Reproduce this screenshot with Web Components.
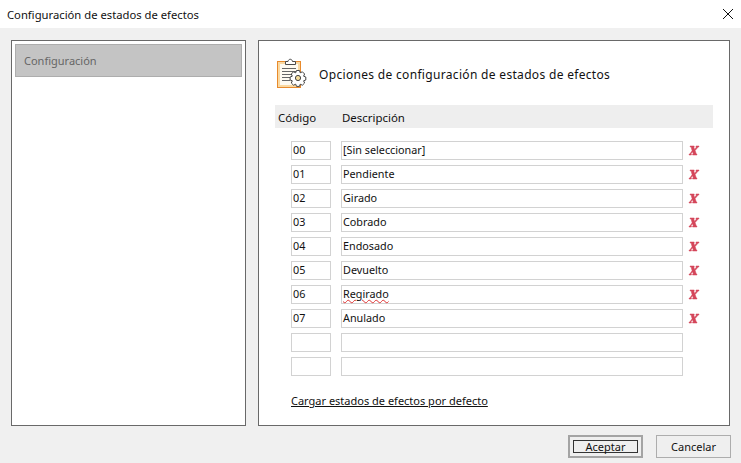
<!DOCTYPE html>
<html>
<head>
<meta charset="utf-8">
<title>Configuración de estados de efectos</title>
<style>
  html, body { margin: 0; padding: 0; background: #f0f0f0; }
  body { font: 12px "Noto Sans", "Open Sans", sans-serif; color: #111; }
</style>
</head>
<body>
<template id="tpl-dialog">
  <style>
    :host { display: flex; flex-direction: column; width: 741px; height: 463px; overflow: hidden; background: #f0f0f0; }
    .title { flex: none; height: 28px; background: #fff; display: flex; align-items: center; justify-content: space-between; padding: 0 8px 0 7px; font-size: 11.25px; }
    .title svg { display: block; }
    .main { flex: none; display: flex; gap: 12px; padding: 12px 11px 0 11px; height: 386px; }
    .foot { flex: none; display: flex; justify-content: flex-end; gap: 13px; padding: 9px 10px 0 0; }
  </style>
  <div class="title">
    <span><slot name="title"></slot></span>
    <svg width="10" height="10" viewBox="0 0 10 10"><path d="M0 0L10 10M10 0L0 10" stroke="#111" stroke-width="1" fill="none"/></svg>
  </div>
  <div class="main"><slot></slot></div>
  <div class="foot"><slot name="buttons"></slot></div>
</template>

<template id="tpl-nav-panel">
  <style>
    :host { display: block; box-sizing: border-box; width: 235px; height: 386px; background: #fff; border: 1px solid #696969; padding: 3px; }
  </style>
  <slot></slot>
</template>

<template id="tpl-nav-item">
  <style>
    :host { display: flex; align-items: center; box-sizing: border-box; height: 33px; width: 227px; padding-left: 8px; background: #c4c4c4; border: 1px solid #adadad; color: #666; font-size: 11px; }
  </style>
  <slot></slot>
</template>

<template id="tpl-options-panel">
  <style>
    :host { display: block; box-sizing: border-box; width: 472px; height: 386px; background: #fff; border: 1px solid #696969; padding: 16px 16px 0 16px; }
    .head { display: flex; align-items: center; gap: 9px; height: 36px; padding-left: 1px; font-size: 12px; letter-spacing: .32px; }
    .head span { padding-bottom: 2px; }
    .head svg { display: block; flex: none; }
    .band { display: flex; align-items: center; height: 23px; margin: 12px 0 13px 0; width: 438px; background: #eee; padding: 1px 0 0 3px; box-sizing: border-box; font-size: 11.45px; }
    .band span:first-child { width: 64px; }
    .rows { display: flex; flex-direction: column; gap: 5px; padding-left: 16px; }
    .link { margin: 17px 0 0 16px; font-size: 11px; text-decoration: underline; color: #111; }
  </style>
  <div class="head">
    <svg width="34" height="34" viewBox="0 0 34 34">
      <rect x="1.5" y="3.5" width="23" height="26" fill="#fad9a2" stroke="#e88a2c"/>
      <rect x="4" y="6" width="18" height="21" fill="#fefaf0"/>
      <path d="M9.5 6.5V3.5H12C12.5 .5 16 .5 16.5 3.5H19.5V6.5Z" fill="#fff" stroke="#4a4a4a"/>
      <path d="M6 10.5H20M6 13.5H20M6 16.5H16M6 19.5H14M6 22.5H14" stroke="#666" fill="none"/>
      <g transform="translate(0 -3)">
        <path d="M20.5 15.5h3l.7 2.3 2.2-1 2.2 2.2-1 2.2 2.2.8v3l-2.2.8 1 2.2-2.2 2.2-2.2-1-.7 2.2h-3l-.8-2.2-2.2 1-2.2-2.2 1-2.2-2.2-.8v-3l2.2-.8-1-2.2 2.2-2.2 2.2 1z" fill="#fff" stroke="#444"/>
        <circle cx="22" cy="23" r="2.6" fill="#f5dc9a" stroke="#444"/>
      </g>
    </svg>
    <span><slot name="heading"></slot></span>
  </div>
  <div class="band"><span>Código</span><span>Descripción</span></div>
  <div class="rows"><slot></slot></div>
  <div class="link"><slot name="link"></slot></div>
</template>

<template id="tpl-state-row">
  <style>
    :host { display: flex; align-items: center; height: 19px; font-size: 10.8px; }
    .box { box-sizing: border-box; height: 19px; border: 1px solid #d2d2d2; background: #fff; padding-left: 1px; line-height: 16px; color: #111; white-space: nowrap; }
    .code { width: 40px; }
    .desc { width: 342px; margin-left: 10px; }
    .x { width: 22px; padding: 0 0 1px 6px; box-sizing: border-box; }
    .x svg { display: block; overflow: visible; }
    .squiggle { text-decoration: underline wavy #d33; text-decoration-thickness: 1px; }
  </style>
  <div class="box code"></div>
  <div class="box desc"></div>
  <div class="x"></div>
</template>

<template id="tpl-dialog-button">
  <style>
    :host { display: flex; align-items: center; justify-content: center; box-sizing: border-box; width: 75px; height: 23px; background: #efefef; border: 1px solid #adadad; font-size: 11px; }
    :host([default]) { border: 2px solid #a4a4a4; padding: 3px; }
    .inner { display: flex; align-items: center; justify-content: center; width: 100%; height: 100%; box-sizing: border-box; }
    :host([default]) .inner { border: 1px solid #333; }
  </style>
  <div class="inner"><slot></slot></div>
</template>

<efectos-dialog>
  <span slot="title">Configuración de estados de efectos</span>
  <nav-panel><nav-item>Configuración</nav-item></nav-panel>
  <options-panel>
    <span slot="heading">Opciones de configuración de estados de efectos</span>
    <state-row code="00" desc="[Sin seleccionar]"></state-row>
    <state-row code="01" desc="Pendiente"></state-row>
    <state-row code="02" desc="Girado"></state-row>
    <state-row code="03" desc="Cobrado"></state-row>
    <state-row code="04" desc="Endosado"></state-row>
    <state-row code="05" desc="Devuelto"></state-row>
    <state-row code="06" desc="Regirado" misspelt></state-row>
    <state-row code="07" desc="Anulado"></state-row>
    <state-row></state-row>
    <state-row></state-row>
    <span slot="link">Cargar estados de efectos por defecto</span>
  </options-panel>
  <dialog-button slot="buttons" default>Aceptar</dialog-button>
  <dialog-button slot="buttons">Cancelar</dialog-button>
</efectos-dialog>

<script>
function stamp(el, id) {
  const root = el.attachShadow({ mode: "open" });
  root.appendChild(document.getElementById(id).content.cloneNode(true));
  return root;
}

class EfectosDialog extends HTMLElement {
  constructor() { super(); stamp(this, "tpl-dialog"); }
}
class NavPanel extends HTMLElement {
  constructor() { super(); stamp(this, "tpl-nav-panel"); }
}
class NavItem extends HTMLElement {
  constructor() { super(); stamp(this, "tpl-nav-item"); }
}
class OptionsPanel extends HTMLElement {
  constructor() { super(); stamp(this, "tpl-options-panel"); }
}
class DialogButton extends HTMLElement {
  constructor() { super(); stamp(this, "tpl-dialog-button"); }
}
class StateRow extends HTMLElement {
  constructor() { super(); stamp(this, "tpl-state-row"); }
  connectedCallback() {
    const code = this.getAttribute("code");
    if (!code) return; // empty rows have no delete mark
    const root = this.shadowRoot;
    root.querySelector(".code").textContent = code;
    const desc = root.querySelector(".desc");
    if (this.hasAttribute("misspelt")) {
      const s = document.createElement("span");
      s.className = "squiggle";
      s.textContent = this.getAttribute("desc");
      desc.appendChild(s);
    } else {
      desc.textContent = this.getAttribute("desc");
    }
    root.querySelector(".x").innerHTML =
      '<svg width="10" height="9" viewBox="0 0 10 9"><path d="M1 0H5.2V.7L4.8 .9L5.6 3.4L7.4 1.1L7 .7V0H10V.7L9.2 1L6.1 4.6L7.3 8L8 8.3V9H3.6V8.3L4.3 8L3.5 5.7L1.8 8L2.4 8.3V9H0V8.3L.8 8L3.1 4.8L2.1 1L1 .7Z" fill="#d4465a" stroke="#d4465a" stroke-width=".5"/></svg>';
  }
}

customElements.define("efectos-dialog", EfectosDialog);
customElements.define("nav-panel", NavPanel);
customElements.define("nav-item", NavItem);
customElements.define("options-panel", OptionsPanel);
customElements.define("dialog-button", DialogButton);
customElements.define("state-row", StateRow);
</script>
</body>
</html>
